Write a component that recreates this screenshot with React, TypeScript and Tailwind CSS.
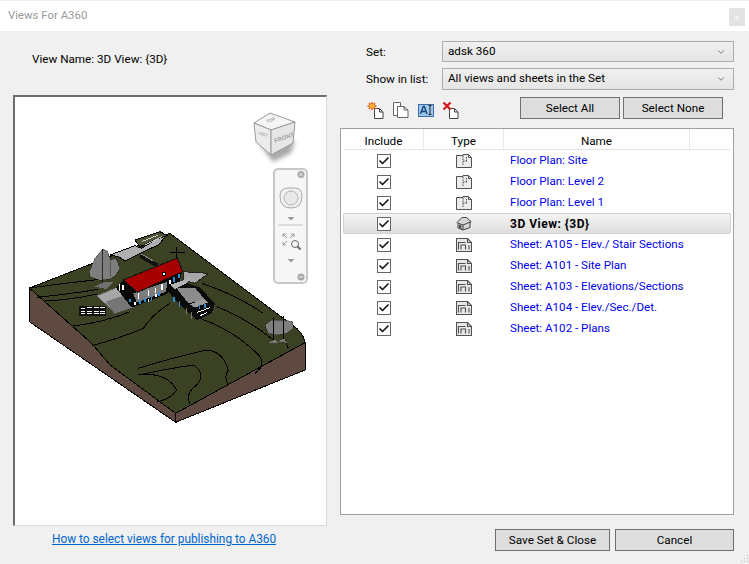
import { Check, ChevronDown } from "lucide-react";

const rows = [
  { name: "Floor Plan: Site", kind: "plan" },
  { name: "Floor Plan: Level 2", kind: "plan" },
  { name: "Floor Plan: Level 1", kind: "plan" },
  { name: "3D View: {3D}", kind: "3d", active: true },
  { name: "Sheet: A105 - Elev./ Stair Sections", kind: "sheet" },
  { name: "Sheet: A101 - Site Plan", kind: "sheet" },
  { name: "Sheet: A103 - Elevations/Sections", kind: "sheet" },
  { name: "Sheet: A104 - Elev./Sec./Det.", kind: "sheet" },
  { name: "Sheet: A102 - Plans", kind: "sheet" },
];

function SmallPage() {
  return <path d="M7.5 7.5h5l3.500 3.500v6.500h-8.500z M12.500 7.500v3.500h3.500" fill="#fff" stroke="#444" />;
}

function NewIcon() {
  return (
    <svg width="18" height="18" viewBox="0 0 18 18">
      <SmallPage />
      <path
        d="M5 1l1 2 2-1-.6 2.200L9.500 5l-2.100.8L8 8 6 7l-1 2-1-2-2 1 .6-2.200L.5 5l2.100-.8L2 2l2 1z"
        fill="#f9b233"
        stroke="#e0561b"
        strokeWidth="0.8"
      />
    </svg>
  );
}

function CopyIcon() {
  return (
    <svg width="18" height="18" viewBox="0 0 18 18" fill="#fff" stroke="#666">
      <path d="M1.500 1.500h7v13h-7z" />
      <path d="M5.500 5.500h6.500l4 3.500v7.500H5.500z M12 5.500V9h4" />
    </svg>
  );
}

function RenameIcon() {
  return (
    <svg width="18" height="18" viewBox="0 0 18 18">
      <rect x="1.500" y="3.500" width="15" height="12" fill="#9cc8ee" stroke="#3a6ea5" />
      <path d="M3.500 13l2.800-7.500h1L10 13M4.700 10.500h4.200" stroke="#14467a" strokeWidth="1.400" fill="none" />
      <path d="M11.500 4.500h3M13 4.500v9M11.500 13.500h3" stroke="#222" fill="none" />
    </svg>
  );
}

function DeleteIcon() {
  return (
    <svg width="18" height="18" viewBox="0 0 18 18">
      <SmallPage />
      <path d="M1.500 1.500l7 7M8.500 1.500l-7 7" stroke="#d01818" strokeWidth="2.200" />
    </svg>
  );
}

function TypeIcon({ kind }: { kind: string }) {
  if (kind === "3d") {
    return (
      <svg width="16" height="15" viewBox="0 0 16 15" fill="none">
        <path d="M1 6.500L6 1.500h4.500L15 5.500l-1 1.500v4.500L7 14l-5-2V7.500z" fill="#d4d6d8" stroke="#444" />
        <path d="M1.500 7l5.500 2v5M7 9l7.500-3" stroke="#444" />
        <path d="M3 8.500l2.500 1v3.500L3 12z" fill="#555" />
      </svg>
    );
  }
  if (kind === "sheet") {
    return (
      <svg width="16" height="14" viewBox="0 0 16 14" fill="none" stroke="#505050" strokeWidth="1.100">
        <path d="M.5.5h11l4 4v9H.5z" fill="#e8e8e8" />
        <path d="M11.500.5v4h4" />
        <path d="M2.500 11.500v-7h7M5 11.500V7h4.500v4.500" />
        <path d="M12.500 7.500h1M13 7.500v4" />
      </svg>
    );
  }
  return (
    <svg width="16" height="14" viewBox="0 0 16 14" fill="none" stroke="#505050">
      <path d="M.5 1.500h6.500v-1h5.500l3 3v10H.5z" fill="#ececec" />
      <path d="M12.500.5v3h3" />
      <path d="M7 2v10M7 7h4.500M10.500 3v4" strokeDasharray="1.500 1" />
    </svg>
  );
}

function SiteModel() {
  return (
    <svg
      className="absolute left-0 top-[103px]"
      width="305"
      height="240"
      viewBox="15 0 915 720"
      strokeWidth="3"
      stroke="#000"
      fill="none"
      shapeRendering="crispEdges"
    >
      {/* terrain */}
      <path d="M58 264V365L497 667V640Z" fill="#5e4a40" />
      <path d="M497 667L885 510V428L497 640Z" fill="#5e4a40" />
      <path d="M58 264L480 100L860 385Q882 405 885 428L497 640L300 495L245 430Z" fill="#3b4224" />
      {/* contours */}
      <path d="M58 264Q160 250 270 238" />
      <path d="M80 292Q180 282 265 268" />
      <path d="M105 303Q180 300 262 282" />
      <path d="M190 378Q290 365 360 335" />
      <path d="M245 437Q330 415 400 385Q425 345 480 310" />
      <path d="M385 505Q480 475 590 450Q640 455 655 510Q640 530 655 555" />
      <path d="M385 525Q480 505 550 495Q590 520 560 555Q525 580 540 612" />
      <path d="M390 525Q470 515 500 570Q480 600 440 605" />
      <path d="M570 355Q680 395 750 470Q765 500 735 520" />
      <path d="M620 320Q710 355 790 420" />
      <path d="M575 250Q680 285 760 340" />
      <path d="M835 445L825 420" />
      <path d="M500 140V180M480 158H525" />

      {/* everything below follows a crop with origin at 210,75 */}
      <g transform="translate(210 75)">
        {/* road at the back */}
        <path d="M90 90L165 62L185 70L240 35L258 32L235 60L190 80L135 108L115 95Z" fill="#b0b0b0" />
        <path d="M165 45L240 20L262 32L235 40L180 65Z" fill="#4e5338" />
        <path d="M185 50L235 30M195 60L245 35" stroke="#c8c8c8" />
        <path d="M180 92L232 122" stroke="#111" strokeWidth="12" />
        <path d="M182 86L220 108" stroke="#888" strokeWidth="3" />
        {/* left tree */}
        <path
          d="M68 72L82 78L92 105L108 100L120 130L108 150L90 162L60 166L30 155L28 140L45 100Z"
          fill="#7e7e7e"
          strokeWidth="1"
        />
        <path d="M68 72V178" strokeWidth="2" />
        <path d="M92 105V155" stroke="#444" strokeWidth="2" />
        <path d="M45 185L70 172L100 172L80 192Z" fill="#707070" stroke="none" />
        {/* paving */}
        <path d="M50 212L115 185L165 245L105 265Z" fill="#a6a6a6" stroke="#555" />
        <path d="M78 230L138 210L165 245L105 265Z" fill="#767676" stroke="none" />
        {/* stacked sign */}
        <path d="M-2 243H78V272H-2Z" fill="#111" stroke="none" />
        <path
          d="M2 250H16M22 247H36M42 247H56M60 247H74M2 258H16M22 258H36M42 258H56M60 258H74M2 266H16M22 266H36M42 266H56M60 266H74"
          stroke="#fff"
        />
        {/* house */}
        <path d="M108 188L130 165L305 145L300 165L258 208L155 248Z" fill="#060606" stroke="none" />
        <path d="M160 205L262 170L258 200L170 232Z" fill="#7d7d7d" stroke="none" />
        <path d="M130 165L292 99L308 140L172 202Z" fill="#a80000" stroke="#111" />
        <path d="M246 142H256V152H246Z" fill="#fff" stroke="#111" />
        <path d="M118 178V198M128 180V195M175 205V222M205 195V212M226 188V204M246 178V194M270 165V176" stroke="#fff" strokeWidth="5" />
        <path d="M150 222V232M180 225V238M195 218V232M214 210V228M236 200V214M282 155V170M296 148V160" stroke="#2d8ed0" strokeWidth="5" />
        <path d="M165 232V240M205 222V232M228 206V216" stroke="#fff" strokeWidth="4" />
        {/* wing */}
        <path d="M310 140L385 145L345 175L310 165Z" fill="#a8a8a8" stroke="#222" />
        <path d="M260 195L296 165L360 188L405 235L395 265L350 285L295 235Z" fill="#0b0b0b" stroke="none" />
        <path d="M290 190L345 188L375 225L325 235Z" fill="#8c8c8c" stroke="none" />
        <path d="M270 180L330 160L320 175L285 192Z" fill="#b4b4b4" stroke="none" />
        <path d="M330 238L372 222L385 232L345 248Z" fill="#9a9a9a" stroke="none" />
        <path d="M282 215V232M298 228V245M358 240V252M375 236V250" stroke="#2d8ed0" strokeWidth="5" />
        <path d="M352 262L390 248M360 272L382 262" stroke="#fff" strokeWidth="3" />
        <path d="M335 262V282M320 250V268" stroke="#777" />
      </g>

      {/* right trees */}
      <path d="M765 375L785 360L820 360L848 365L850 385L830 400L800 405L775 400Z" fill="#7e7e7e" strokeWidth="1" />
      <path d="M790 350V420M820 348V420" />
      <path d="M775 428L795 418L805 430ZM805 425L822 415L830 428Z" fill="#787878" stroke="none" />
    </svg>
  );
}

function ViewCube() {
  return (
    <svg className="absolute left-[236px] top-[8px]" width="52" height="62" viewBox="0 0 52 62" fill="none">
      <path d="M8 38L44 36L40 48L22 57Z" fill="#a8a8a8" className="blur-[2px]" />
      <path d="M3 18L19 8L44 17L20 25Z" fill="#f5f5f5" stroke="#9a9a9a" />
      <path d="M3 18L5 37L20 50V25Z" fill="#ececec" stroke="#9a9a9a" />
      <path d="M20 25L44 17L42 38L20 50Z" fill="#e6e6e6" stroke="#9a9a9a" />
      <g fontFamily="'Liberation Sans', sans-serif" fontWeight="700" fill="#a0a0a0">
        <text x="24" y="38" fontSize="6" transform="rotate(-20 24 38)">
          FRONT
        </text>
        <text x="16" y="18" fontSize="4.500" transform="rotate(-18 16 18)">
          TOP
        </text>
        <text x="7" y="29" fontSize="4" transform="rotate(20 7 29)">
          LEFT
        </text>
      </g>
    </svg>
  );
}

function NavBar() {
  return (
    <div className="absolute left-[258px] top-[71px] flex h-[116px] w-[35px] rounded-[5px] border-2 border-[#c8c8c8] bg-[#f6f6f6]">
      <svg width="31" height="112" viewBox="0 0 31 112" fill="none">
        <circle cx="26" cy="4.500" r="3.500" fill="#a8a8a8" />
        <path d="M24.500 3l3 3M27.500 3l-3 3" stroke="#eee" />
        <path d="M5 26q0-8 8-8h7q7 0 7 8q0 12-11 12Q5 38 5 26z" stroke="#a8a8a8" fill="#f0f0f0" />
        <circle cx="16" cy="28" r="7" stroke="#b4b4b4" fill="#e8e8e8" />
        <path d="M12.500 47h7l-3.500 3.500z" fill="#999" />
        <path d="M3 55h25" stroke="#c4c4c4" />
        <path d="M8 64l4 4M8 64h3M8 64v3M19 64l-4 4M19 64h-3M19 64v3M8 75l4-4M8 75h3M8 75v-3" stroke="#999" />
        <circle cx="20" cy="74" r="3.500" stroke="#666" />
        <path d="M22.500 76.500l3 3" stroke="#666" strokeWidth="2" />
        <path d="M12.500 89h7l-3.500 3.500z" fill="#999" />
        <circle cx="26" cy="107" r="3.500" fill="#a8a8a8" />
        <path d="M24 107h4" stroke="#eee" />
      </svg>
    </div>
  );
}

function Dropdown({ value }: { value: string }) {
  return (
    <div className="flex flex-1 items-center justify-between border border-[#acacac] bg-gradient-to-b from-[#f0f0f0] to-[#e5e5e5] pl-[5px] pr-[7px]">
      <span>{value}</span>
      <ChevronDown size={10} className="text-[#666]" />
    </div>
  );
}

function Btn({ label, className = "" }: { label: string; className?: string }) {
  return (
    <button className={`flex h-[22px] items-center justify-center border border-[#6f6f6f] bg-[#dddddd] pt-[1px] text-[#000] ${className}`}>
      {label}
    </button>
  );
}

export default function App() {
  return (
    <div className="relative flex h-[564px] w-[749px] flex-col overflow-hidden bg-[#f0f0f0] text-[11.7px] leading-none text-[#000] [font-family:Roboto,'Noto_Sans',sans-serif]">
      <div className="flex h-[31px] items-start justify-between border-t border-[#f0f0f0] bg-white pl-[8px] pr-[4px]">
        <span className="pt-[9px] text-[11.4px] text-[#9a9a9a]">Views For A360</span>
        <span className="mt-[7px] flex h-[18px] w-[16px] items-center justify-center bg-[#e3e3e3] text-[11px] font-bold text-[#f4f4f4]">×</span>
      </div>

      <div className="flex flex-1 pl-[13px] pr-[15px]">
        <div className="flex w-[314px] flex-col">
          <p className="pl-[19px] pt-[23px]">View Name: 3D View: {"{3D}"}</p>
          <div className="relative mt-[29px] h-[431px] border-2 border-b border-r border-[#6d6d6d] border-b-[#dcdcdc] border-r-[#dcdcdc] bg-white">
            <SiteModel />
            <ViewCube />
            <NavBar />
          </div>
          <a href="#" className="mt-[8px] pl-[39px] text-[11.85px] text-[#0066cc] underline">
            How to select views for publishing to A360
          </a>
        </div>

        <div className="ml-[13px] flex w-[394px] flex-col pt-[10px]">
          <div className="flex h-[21px] items-stretch pl-[26px]">
            <span className="flex w-[76px] items-center pt-[3px]">Set:</span>
            <Dropdown value="adsk 360" />
          </div>
          <div className="mt-[6px] flex h-[22px] items-stretch pl-[26px]">
            <span className="flex w-[76px] items-center pt-[1px]">Show in list:</span>
            <Dropdown value="All views and sheets in the Set" />
          </div>
          <div className="mt-[7px] flex items-center pl-[27px]">
            <div className="flex w-[153px] gap-[7px] pt-[3px]">
              <NewIcon />
              <CopyIcon />
              <RenameIcon />
              <DeleteIcon />
            </div>
            <div className="flex gap-[3px]">
              <Btn label="Select All" className="w-[100px]" />
              <Btn label="Select None" className="w-[100px]" />
            </div>
          </div>

          <div className="mt-[9px] flex h-[387px] flex-col border border-[#a0a0a0] bg-white px-[3px]">
            <div className="grid h-[21px] shrink-0 grid-cols-[80px_80px_186px_1fr] items-center border-b border-[#e3e3e3] text-center">
              <span className="border-r border-[#e8e8e8] pt-[2px] leading-[20px]">Include</span>
              <span className="border-r border-[#e8e8e8] pt-[2px] leading-[20px]">Type</span>
              <span className="border-r border-[#e8e8e8] pt-[2px] leading-[20px]">Name</span>
              <span className="h-[20px]" />
            </div>
            <div>
              {rows.map((row) => (
                <div
                  key={row.name}
                  className={`grid h-[21px] grid-cols-[80px_80px_1fr] items-center ${
                    row.active
                      ? "-mx-[1px] rounded-[2px] border border-[#d2d2d2] bg-gradient-to-b from-[#f4f4f4] to-[#dedede]"
                      : ""
                  }`}
                >
                  <span className="flex justify-center">
                    <span className="flex h-[14px] w-[14px] items-center justify-center border border-[#666] bg-white">
                      <Check size={12} strokeWidth={3.5} className="text-[#1a1a1a]" />
                    </span>
                  </span>
                  <span className="flex justify-center">
                    <TypeIcon kind={row.kind} />
                  </span>
                  <span
                    className={`pl-[6px] ${
                      row.active ? "text-[12px] font-bold tracking-[0.5px] text-black" : "text-[11.6px] text-[#0000ee]"
                    }`}
                  >
                    {row.name}
                  </span>
                </div>
              ))}
            </div>
          </div>

          <div className="mt-[14px] flex justify-end gap-[5px]">
            <Btn label="Save Set & Close" className="w-[115px]" />
            <Btn label="Cancel" className="w-[119px]" />
          </div>
        </div>
      </div>

      {/* resize grip */}
      <svg className="absolute bottom-0 right-0" width="10" height="10" viewBox="0 0 10 10" fill="#b8b8b8">
        <path d="M8 1h1v1H8zM5 4h1v1H5zM8 4h1v1H8zM2 7h1v1H2zM5 7h1v1H5zM8 7h1v1H8z" />
      </svg>
    </div>
  );
}
